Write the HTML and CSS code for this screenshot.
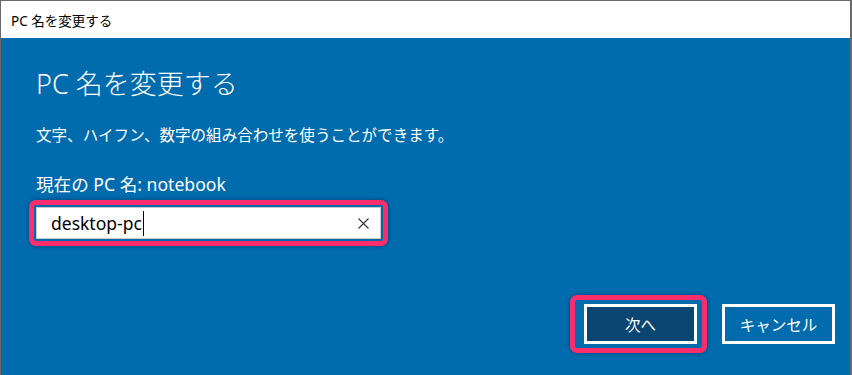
FILE: index.html
```html
<!DOCTYPE html>
<html lang="ja">
<head>
<meta charset="utf-8">
<title>PC 名を変更する</title>
<link rel="stylesheet" href="styles.css">
</head>
<body>
<div class="window">
  <div class="titlebar">PC 名を変更する</div>
  <div class="content">
    <h1 class="heading">PC 名を変更する</h1>
    <p class="subtitle">文字、ハイフン、数字の組み合わせを使うことができます。</p>
    <p class="label">現在の PC 名: notebook</p>
    <div class="mark mark-input">
      <div class="textbox">
        <span class="value">desktop-pc</span><span class="caret"></span>
        <svg class="clear" width="11" height="11" viewBox="0 0 11 11"><path d="M0.5 0.5L10.5 10.5M10.5 0.5L0.5 10.5" stroke="#333" stroke-width="1.1" fill="none"/></svg>
      </div>
    </div>
    <div class="actions">
      <div class="mark mark-button">
        <button class="btn btn-primary">次へ</button>
      </div>
      <button class="btn btn-secondary">キャンセル</button>
    </div>
  </div>
</div>
</body>
</html>
```
FILE: styles.css
```css
* { box-sizing: border-box; }
html, body { margin: 0; padding: 0; }
body {
  width: 852px;
  height: 375px;
  overflow: hidden;
  font-family: "Noto Sans", "Noto Sans CJK JP", sans-serif;
  background: #ffffff;
}
.window {
  width: 852px;
  height: 375px;
  display: flex;
  flex-direction: column;
  border-top: 1px solid #6a6a6a;
  border-left: 1px solid #6a6a6a;
  border-right: 2px solid #6a6a6a;
}
.titlebar {
  height: 37px;
  flex: none;
  display: flex;
  align-items: center;
  padding-left: 10px;
  font-size: 13.5px;
  color: #000;
  background: #fff;
}
.content {
  flex: 1;
  background: #006cae;
  color: #fff;
  display: flex;
  flex-direction: column;
  align-items: flex-start;
  padding: 0 15px 22px 35px;
}
.heading {
  margin: 28px 0 0;
  font-size: 27px;
  line-height: 36px;
  font-weight: 300;
}
.subtitle {
  margin: 23px 0 0;
  font-size: 15.55px;
  line-height: 20px;
}
.label {
  margin: 29px 0 0;
  font-size: 17.6px;
  line-height: 20px;
}
.mark {
  border: 5px solid #fb2d6c;
  border-radius: 7px;
  box-shadow: 0 0 4px rgba(0, 30, 60, 0.55);
}
.mark-input {
  margin: 6px 0 0 -7px;
  padding: 2px;
}
.textbox {
  width: 345px;
  height: 32px;
  background: #fff;
  border: 1px solid #c9c9c9;
  display: flex;
  align-items: center;
  padding-left: 14px;
  padding-right: 11px;
  color: #000;
}
.value {
  font-size: 17.5px;
  line-height: 24px;
}
.caret {
  width: 1px;
  height: 25px;
  background: #000;
  margin-left: 1px;
}
.clear {
  margin-left: auto;
  display: block;
}
.actions {
  margin-top: auto;
  align-self: stretch;
  display: flex;
  justify-content: flex-end;
  align-items: center;
  gap: 15px;
}
.mark-button {
  padding: 4px 5px 4px 9px;
}
.btn {
  width: 113px;
  height: 40px;
  border: 3px solid #fff;
  color: #fff;
  font-family: "Noto Sans", "Noto Sans CJK JP", sans-serif;
  font-size: 15.5px;
  padding: 0;
  display: block;
}
.btn-primary { background: #0b4673; }
.btn-secondary { background: #006cae; }
```
